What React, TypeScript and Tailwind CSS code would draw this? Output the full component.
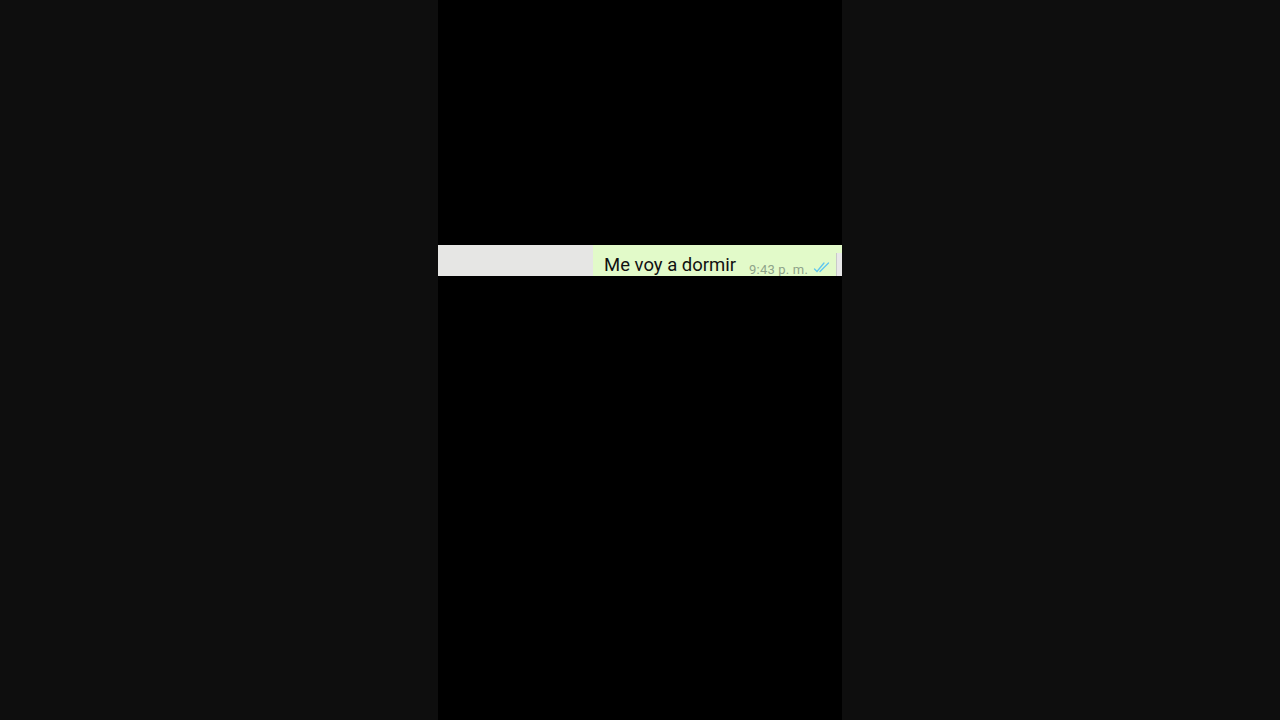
const DoubleCheck = () => (
  <svg width="17" height="11" viewBox="0 0 17 11" fill="none" stroke="#5ec5f0" strokeWidth="1.3" strokeLinecap="round">
    <path d="M1.5 7l2.5 2.5L11 1" />
    <path d="M7 9.5L15.5 1" />
  </svg>
);

const App = () => {
  return (
    <div className="w-[1280px] h-[720px] bg-[#0e0e0e] flex justify-center overflow-hidden">
      <div className="w-[404px] h-full bg-black flex flex-col">
        <div className="h-[245px]" />
        <div className="h-[31px] flex overflow-hidden">
          <div className="w-[155px] h-full bg-[#e6e6e4]" />
          <div className="flex-1 h-full bg-[#e2fac9] flex items-start pl-[11px] relative">
            <span
              className="text-[18.5px] leading-none text-[#111] mt-[11px]"
              style={{ fontFamily: 'Roboto, "Liberation Sans", sans-serif' }}
            >
              Me voy a dormir
            </span>
            <span
              className="ml-[13px] mt-[18px] text-[13px] leading-none text-[#8fa38a] tracking-[0.2px]"
              style={{ fontFamily: 'Roboto, "Liberation Sans", sans-serif' }}
            >
              9:43 p. m.
            </span>
            <span className="ml-[5px] mt-[17px]">
              <DoubleCheck />
            </span>
            <div className="absolute right-0 top-[8px] bottom-0 w-[6px] bg-[#e8e8e8] border-l border-[#c9c9c9]" />
          </div>
        </div>
        <div className="flex-1" />
      </div>
    </div>
  );
};

export default App;
